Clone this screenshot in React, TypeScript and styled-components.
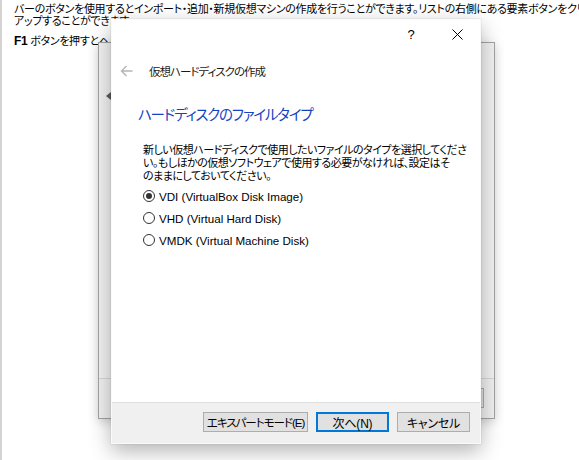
import React from "react";
import styled, { createGlobalStyle } from "styled-components";

const GlobalStyle = createGlobalStyle`
  html, body { margin: 0; padding: 0; background: #fff; }
  body {
    font-family: "Liberation Sans", "Noto Sans CJK JP", sans-serif;
    overflow: hidden;
  }
  #root { width: 579px; height: 460px; }
`;

const Desktop = styled.div`
  position: relative;
  width: 579px;
  height: 460px;
  overflow: hidden;
  box-sizing: border-box;
  border-left: 2px solid #d4d4d4;
  background: #fff;
`;

const HelpText = styled.div`
  padding: 3px 0 0 12px;
  font-size: 11px;
  line-height: 12px;
  letter-spacing: -0.3px;
  color: #000;
  white-space: nowrap;
  font-feature-settings: "palt";
`;

const HelpPara = styled.p`
  margin: 0;
  & + & { margin-top: 8px; }
  b { font-weight: 700; font-size: 12px; }
`;

/* background window */
const BackWindow = styled.div`
  position: absolute;
  left: 96px;
  top: 42px;
  width: 397px;
  height: 377px;
  box-sizing: border-box;
  border: 1px solid #a3a3a3;
  box-shadow: 0 3px 10px rgba(0, 0, 0, 0.18);
  display: flex;
  flex-direction: column;
  background: #f2f2f2;
`;

const BackBody = styled.div`
  flex: 1;
  padding: 49px 0 0 7px;
`;

const BackTriangle = styled.div`
  width: 0;
  height: 0;
  border-top: 4px solid transparent;
  border-bottom: 4px solid transparent;
  border-right: 5px solid #5a5a5a;
`;

const BackFooter = styled.div`
  height: 40px;
  box-sizing: border-box;
  border-top: 1px solid #d6d6d6;
  background: #f0f0f0;
  display: flex;
  justify-content: flex-end;
  align-items: flex-start;
  padding: 9px 10px 0 0;
`;

/* main dialog */
const Dialog = styled.div`
  position: absolute;
  left: 109px;
  top: 19px;
  width: 370px;
  height: 425px;
  box-sizing: border-box;
  border: 1px solid #fafafa;
  background: #fff;
  box-shadow: 0 0 0 1px rgba(0, 0, 0, 0.04), 0 7px 20px rgba(0, 0, 0, 0.3);
  display: flex;
  flex-direction: column;
`;

const TitleBar = styled.div`
  height: 28px;
  display: flex;
  justify-content: flex-end;
  flex-shrink: 0;
`;

const CaptionButton = styled.div`
  width: 46px;
  height: 28px;
  display: flex;
  align-items: center;
  justify-content: center;
  font-family: "Liberation Sans", sans-serif;
  font-size: 13px;
  color: #000;
`;

const Body = styled.div`
  flex: 1;
  display: flex;
  flex-direction: column;
`;

const HeaderRow = styled.div`
  height: 46px;
  display: flex;
  align-items: center;
  padding-left: 8px;
`;

const WizardTitle = styled.span`
  margin-left: 16px;
  font-family: "Noto Sans CJK JP", sans-serif;
  font-size: 11.5px;
  letter-spacing: -1px;
  color: #1a1a1a;
  font-feature-settings: "palt";
`;

const Content = styled.div`
  padding-left: 26px;
  display: flex;
  flex-direction: column;
`;

const Heading = styled.div`
  margin-top: 10px;
  font-family: "Noto Sans CJK JP", sans-serif;
  font-size: 14.5px;
  line-height: 20px;
  letter-spacing: -1.2px;
  color: #1443c2;
  font-feature-settings: "palt";
`;

const Description = styled.div`
  margin-top: 19px;
  padding-left: 5px;
  font-family: "Noto Sans CJK JP", sans-serif;
  font-size: 11px;
  line-height: 13px;
  letter-spacing: -0.5px;
  color: #000;
  white-space: nowrap;
  font-feature-settings: "palt";
`;

const RadioList = styled.div`
  margin-top: 3px;
  padding-left: 5px;
  display: flex;
  flex-direction: column;
`;

const RadioRow = styled.label`
  height: 22px;
  display: flex;
  align-items: center;
  gap: 4px;
  font-size: 11.6px;
  color: #000;
`;

const RadioCircle = styled.span<{ $checked?: boolean }>`
  width: 12px;
  height: 12px;
  box-sizing: border-box;
  border: 1px solid #333;
  border-radius: 50%;
  background: #fff;
  display: flex;
  align-items: center;
  justify-content: center;
  &::after {
    content: "";
    display: ${(p) => (p.$checked ? "block" : "none")};
    width: 6px;
    height: 6px;
    border-radius: 50%;
    background: #333;
  }
`;

const Footer = styled.div`
  height: 41px;
  flex-shrink: 0;
  box-sizing: border-box;
  border-top: 1px solid #dfdfdf;
  background: #f0f0f0;
  display: flex;
  justify-content: flex-end;
  align-items: flex-start;
  gap: 8px;
  padding: 9px 10px 0 0;
`;

const Button = styled.div<{ $width: number; $default?: boolean; $tight?: boolean }>`
  width: ${(p) => p.$width}px;
  height: 20px;
  box-sizing: border-box;
  border: ${(p) => (p.$default ? "2px solid #0078d7" : "1px solid #adadad")};
  background: #e1e1e1;
  display: flex;
  align-items: center;
  justify-content: center;
  font-size: ${(p) => (p.$tight ? "11.5px" : "12px")};
  color: #000;
  white-space: nowrap;
  font-feature-settings: "palt";
  letter-spacing: ${(p) => (p.$tight ? "-1px" : "-0.2px")};
`;

const BackArrow = () => (
  <svg width="13" height="12" viewBox="0 0 13 12" fill="none">
    <path d="M12.5 6H1.5M6.5 1L1.5 6l5 5" stroke="#b5b5b5" strokeWidth="1.4" />
  </svg>
);

const CloseIcon = () => (
  <svg width="11" height="11" viewBox="0 0 11 11" fill="none">
    <path d="M0.5 0.5l10 10M10.5 0.5l-10 10" stroke="#000" strokeWidth="1" />
  </svg>
);

const options = [
  { label: "VDI (VirtualBox Disk Image)", checked: true },
  { label: "VHD (Virtual Hard Disk)", checked: false },
  { label: "VMDK (Virtual Machine Disk)", checked: false },
];

export default function App() {
  return (
    <>
      <GlobalStyle />
      <Desktop>
        <HelpText>
          <HelpPara>
            バーのボタンを使用するとインポート・追加・新規仮想マシンの作成を行うことができます。リストの右側にある要素ボタンをクリック
            <br />
            アップすることができます。
          </HelpPara>
          <HelpPara>
            <b>F1</b> ボタンを押すとヘルプを表示します。
          </HelpPara>
        </HelpText>

        <BackWindow>
          <BackBody>
            <BackTriangle />
          </BackBody>
          <BackFooter>
            <Button $width={73}>キャンセル</Button>
          </BackFooter>
        </BackWindow>

        <Dialog>
          <TitleBar>
            <CaptionButton>?</CaptionButton>
            <CaptionButton>
              <CloseIcon />
            </CaptionButton>
          </TitleBar>
          <Body>
            <HeaderRow>
              <BackArrow />
              <WizardTitle>仮想ハードディスクの作成</WizardTitle>
            </HeaderRow>
            <Content>
              <Heading>ハードディスクのファイルタイプ</Heading>
              <Description>
                新しい仮想ハードディスクで使用したいファイルのタイプを選択してくださ
                <br />
                い。もしほかの仮想ソフトウェアで使用する必要がなければ、設定はそ
                <br />
                のままにしておいてください。
              </Description>
              <RadioList>
                {options.map((o) => (
                  <RadioRow key={o.label}>
                    <RadioCircle $checked={o.checked} />
                    {o.label}
                  </RadioRow>
                ))}
              </RadioList>
            </Content>
          </Body>
          <Footer>
            <Button $width={105} $tight>
              エキスパートモード(E)
            </Button>
            <Button $width={73} $default>
              次へ(N)
            </Button>
            <Button $width={73}>キャンセル</Button>
          </Footer>
        </Dialog>
      </Desktop>
    </>
  );
}
